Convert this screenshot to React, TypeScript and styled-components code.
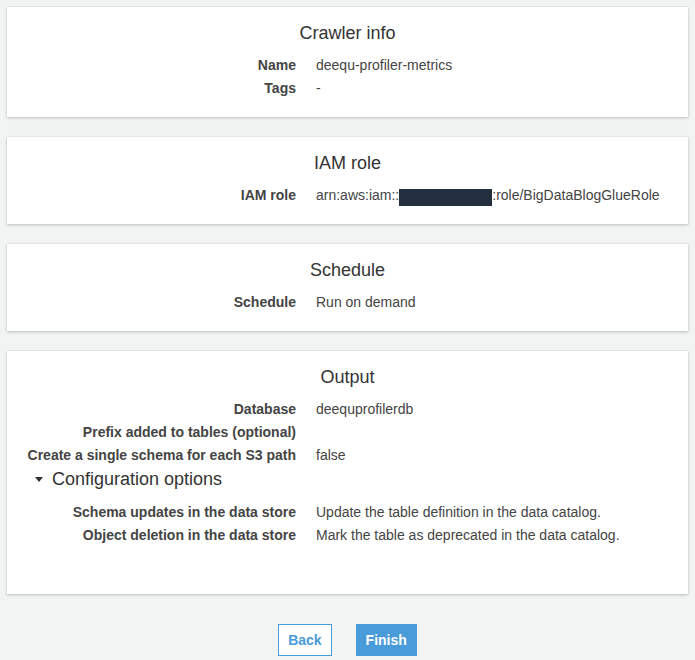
import React, { FC } from 'react';
import styled, { createGlobalStyle } from 'styled-components';

const GlobalStyle = createGlobalStyle`
  html, body {
    margin: 0;
    padding: 0;
    background: #f2f3f3;
  }
  body {
    font-family: "Liberation Sans", Arial, Helvetica, sans-serif;
    color: #444;
  }
`;

interface Field {
  label: string;
  value: React.ReactNode;
}

const crawlerFields: Field[] = [
  { label: 'Name', value: 'deequ-profiler-metrics' },
  { label: 'Tags', value: '-' },
];

const outputFields: Field[] = [
  { label: 'Database', value: 'deequprofilerdb' },
  { label: 'Prefix added to tables (optional)', value: '' },
  { label: 'Create a single schema for each S3 path', value: 'false' },
];

const configFields: Field[] = [
  {
    label: 'Schema updates in the data store',
    value: 'Update the table definition in the data catalog.',
  },
  {
    label: 'Object deletion in the data store',
    value: 'Mark the table as deprecated in the data catalog.',
  },
];

const FieldList: FC<{ fields: Field[] }> = ({ fields }) => (
  <StyledGrid>
    {fields.map(field => (
      <React.Fragment key={field.label}>
        <StyledLabel>{field.label}</StyledLabel>
        <StyledValue>{field.value}</StyledValue>
      </React.Fragment>
    ))}
  </StyledGrid>
);

const App: FC = () => {
  return (
    <>
      <GlobalStyle />
      <StyledPage>
        <StyledCard>
          <StyledTitle>Crawler info</StyledTitle>
          <FieldList fields={crawlerFields} />
        </StyledCard>

        <StyledCard>
          <StyledTitle>IAM role</StyledTitle>
          <FieldList
            fields={[
              {
                label: 'IAM role',
                value: (
                  <>
                    arn:aws:iam::
                    <StyledRedacted />
                    :role/BigDataBlogGlueRole
                  </>
                ),
              },
            ]}
          />
        </StyledCard>

        <StyledCard>
          <StyledTitle>Schedule</StyledTitle>
          <FieldList fields={[{ label: 'Schedule', value: 'Run on demand' }]} />
        </StyledCard>

        <StyledCard>
          <StyledTitle>Output</StyledTitle>
          <FieldList fields={outputFields} />
          <StyledToggle>
            <StyledCaret />
            Configuration options
          </StyledToggle>
          <StyledSection>
            <FieldList fields={configFields} />
          </StyledSection>
        </StyledCard>

        <StyledFooter>
          <StyledButton>Back</StyledButton>
          <StyledButton $primary>Finish</StyledButton>
        </StyledFooter>
      </StyledPage>
    </>
  );
};

const StyledPage = styled.div`
  display: flex;
  flex-direction: column;
  gap: 20px;
  padding: 7px 7px 0;
`;

const StyledCard = styled.section`
  background: #fff;
  padding: 15px 20px 17px;
  box-shadow: 0 1px 3px rgba(0, 28, 36, 0.22), 0 0 1px rgba(0, 28, 36, 0.12);
`;

const StyledTitle = styled.h2`
  margin: 0 0 10px;
  font-size: 18px;
  line-height: 22px;
  font-weight: 400;
  color: #333;
  text-align: center;
`;

const StyledGrid = styled.div`
  display: grid;
  grid-template-columns: 269px 1fr;
  column-gap: 20px;
  font-size: 14px;
  line-height: 23px;
`;

const StyledLabel = styled.div`
  text-align: right;
  font-weight: 700;
  color: #444;
  white-space: nowrap;
`;

const StyledValue = styled.div`
  color: #444;
  white-space: nowrap;
  min-height: 23px;
`;

const StyledRedacted = styled.span`
  display: inline-block;
  width: 93px;
  height: 17px;
  background: #232f3e;
  vertical-align: -6px;
`;

const StyledToggle = styled.div`
  display: flex;
  align-items: center;
  gap: 9px;
  margin: 1px 0 0 8px;
  font-size: 18px;
  line-height: 22px;
  color: #333;
`;

const StyledCaret = styled.span`
  width: 0;
  height: 0;
  border-left: 4.5px solid transparent;
  border-right: 4.5px solid transparent;
  border-top: 5px solid #333;
  margin-top: 1px;
`;

const StyledSection = styled.div`
  margin-top: 11px;
  padding-bottom: 30px;
`;

const StyledFooter = styled.div`
  display: flex;
  justify-content: center;
  gap: 24px;
  padding-top: 10px;
`;

const StyledButton = styled.button<{ $primary?: boolean }>`
  height: 32px;
  padding: 0 9px;
  border: 1px solid #4a9bd9;
  background: ${({ $primary }) => ($primary ? '#4a9bd9' : '#fff')};
  color: ${({ $primary }) => ($primary ? '#fff' : '#4a9bd9')};
  font-family: "Liberation Sans", Arial, sans-serif;
  font-size: 14px;
  font-weight: 700;
  cursor: pointer;
`;

export default App;
